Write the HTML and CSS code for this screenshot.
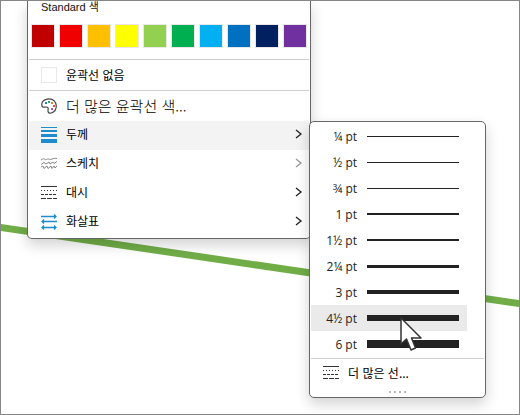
FILE: index.html
```
<!DOCTYPE html>
<html lang="ko">
<head>
  <meta charset="UTF-8" />
  <meta name="viewport" content="width=device-width, initial-scale=1" />
  <title>윤곽선 두께</title>
  <link rel="stylesheet" href="styles.css">
</head>
<body>
  <main class="canvas">
    <svg class="drawn-line" viewBox="0 0 518 413" preserveAspectRatio="none" aria-hidden="true">
      <line x1="-10" y1="225" x2="528" y2="304" stroke="#70ad47" stroke-width="7" />
    </svg>

    <!-- Outline menu -->
    <div class="menu outline-menu">
      <h2 class="menu-title">Standard 색</h2>
      <div class="swatches">
        <button class="swatch dark-red" aria-label="진한 빨강"></button>
        <button class="swatch red" aria-label="빨강"></button>
        <button class="swatch orange" aria-label="주황"></button>
        <button class="swatch yellow" aria-label="노랑"></button>
        <button class="swatch light-green" aria-label="연한 녹색"></button>
        <button class="swatch green" aria-label="녹색"></button>
        <button class="swatch light-blue" aria-label="연한 파랑"></button>
        <button class="swatch blue" aria-label="파랑"></button>
        <button class="swatch dark-blue" aria-label="진한 파랑"></button>
        <button class="swatch purple" aria-label="자주"></button>
      </div>
      <button class="item bordered">
        <span class="no-outline"></span>
        <span class="label">윤곽선 없음</span>
      </button>
      <button class="item bordered large">
        <svg class="icon" viewBox="0 0 16 16">
          <path d="M8 .8C3.600.8.700 3.400.700 6.500c0 2 1.300 3 2.900 2.700 1.500-.3 2.600-.5 3.300.5.900 1.200-.3 2.400.2 4 .5 1.500 2.100 1.800 3.800 1.100 2.700-1.100 4.400-3.800 4.400-6.800C15.300 3.800 12.300.8 8 .8z" fill="#fff" stroke="#444" stroke-width="1.200" />
          <rect x="4" y="4" width="2" height="2" fill="#1e8bcd" />
          <rect x="7" y="3" width="2" height="2" fill="#2fa56a" />
          <rect x="10" y="4" width="2" height="2" fill="#e8812d" />
          <rect x="12" y="7" width="2" height="2" fill="#dd4b4b" />
          <rect x="10" y="10" width="2" height="2" fill="#a356c4" />
        </svg>
        <span class="label">더 많은 윤곽선 색...</span>
      </button>
      <button class="item sub active">
        <svg class="icon" viewBox="0 0 16 16" fill="#1e8bcd" shape-rendering="crispEdges">
          <rect y="0" width="16" height="1" />
          <rect y="3" width="16" height="2" />
          <rect y="7" width="16" height="3" />
          <rect y="12" width="16" height="4" />
        </svg>
        <span class="label">두께</span>
        <svg class="chevron" viewBox="0 0 8 10"><path d="M1 1l5 4-5 4" /></svg>
      </button>
      <button class="item sub">
        <svg class="icon" viewBox="0 0 16 16" fill="none" stroke="#888">
          <path d="M0 4c2-1.500 3-1.500 4-.5s2-1 3.500-.5 2 1 3.500 0 3-.5 5-.5" />
          <path d="M0 8.500l3-2 2 1.500 3-2 1 2 3-2 1 1.500 3-2" />
          <path d="M0 11l2-1 1 2.500 3-2.500 1 2.500 3-2.500 1 2.500 2-2.500 1 2 2-2" />
        </svg>
        <span class="label">스케치</span>
        <svg class="chevron muted" viewBox="0 0 8 10"><path d="M1 1l5 4-5 4" /></svg>
      </button>
      <button class="item sub">
        <svg class="icon" viewBox="0 0 16 16" fill="none" stroke="#333" shape-rendering="crispEdges">
          <path d="M0 1.500h16" />
          <path d="M0 5.500h16" stroke-dasharray="1 2" />
          <path d="M0 9.500h16" stroke-dasharray="3 1" />
          <path d="M0 13.500h16" stroke-dasharray="5 1" />
        </svg>
        <span class="label">대시</span>
        <svg class="chevron" viewBox="0 0 8 10"><path d="M1 1l5 4-5 4" /></svg>
      </button>
      <button class="item sub">
        <svg class="icon" viewBox="0 0 16 16" fill="none" stroke="#1e8bcd" stroke-width="1.300">
          <path d="M0 2.500h15M13 .5l2 2-2 2" />
          <path d="M16 7.500H1M3 5.500l-2 2 2 2" />
          <path d="M1 13.500h14M3 11.500l-2 2 2 2M13 11.500l2 2-2 2" />
        </svg>
        <span class="label">화살표</span>
        <svg class="chevron" viewBox="0 0 8 10"><path d="M1 1l5 4-5 4" /></svg>
      </button>
    </div>

    <!-- Weight submenu -->
    <div class="menu weight-menu">
      <button class="weight"><span class="pt">¼ pt</span><span class="rule w1"></span></button>
      <button class="weight"><span class="pt">½ pt</span><span class="rule w1"></span></button>
      <button class="weight"><span class="pt">¾ pt</span><span class="rule w1"></span></button>
      <button class="weight"><span class="pt">1 pt</span><span class="rule w2"></span></button>
      <button class="weight"><span class="pt">1½ pt</span><span class="rule w2"></span></button>
      <button class="weight"><span class="pt">2¼ pt</span><span class="rule w3"></span></button>
      <button class="weight"><span class="pt">3 pt</span><span class="rule w4"></span></button>
      <button class="weight hovered"><span class="pt">4½ pt</span><span class="rule w6"></span></button>
      <button class="weight"><span class="pt">6 pt</span><span class="rule w8"></span></button>
      <button class="item more-lines">
        <svg class="icon" viewBox="0 0 16 16" fill="none" stroke="#333" shape-rendering="crispEdges">
          <path d="M0 1.500h16" />
          <path d="M0 5.500h16" stroke-dasharray="1 2" />
          <path d="M0 9.500h16" stroke-dasharray="3 1" />
          <path d="M0 13.500h16" stroke-dasharray="5 1" />
        </svg>
        <span class="label">더 많은 선...</span>
      </button>
      <div class="grip"><i></i><i></i><i></i><i></i></div>
      <svg class="cursor" viewBox="0 0 24 36" aria-hidden="true">
        <path d="M2 2v26l5.500-5L12 34l4.500-2-4-10H22z" fill="#fff" stroke="#333" stroke-width="1.500" stroke-linejoin="round" />
      </svg>
    </div>
  </main>
</body>
</html>
```

FILE: styles.css
```
* {
  box-sizing: border-box;
}

body {
  margin: 0;
  font-family: "Open Sans", "Noto Sans CJK KR", sans-serif;
  font-size: 12px;
  color: #111;
  background: #fff;
}

button {
  margin: 0;
  padding: 0;
  border: none;
  background: none;
  font: inherit;
  color: inherit;
  text-align: left;
  cursor: pointer;
}

.canvas {
  position: relative;
  min-height: 100vh;
  border: 1px solid #868686;
  overflow: hidden;
}

.drawn-line {
  position: absolute;
  inset: 0;
  width: 100%;
  height: 100%;
}

.menu {
  position: absolute;
  background: #fff;
  border: 1px solid #666;
  box-shadow: 0 6px 14px rgba(0, 0, 0, 0.18);
}

/* Outline menu */
.outline-menu {
  top: 0;
  left: 26px;
  width: 284px;
  padding: 0 1px 1px;
  border-top: none;
  border-radius: 0 0 5px 5px;
}

.menu-title {
  margin: 0;
  padding-left: 12px;
  font-family: "Liberation Sans", "Noto Sans CJK KR", sans-serif;
  font-size: 11px;
  font-weight: normal;
  line-height: 12px;
}

.swatches {
  display: flex;
  gap: 4px;
  padding: 11px 2px;
}

.swatch {
  width: 24px;
  height: 24px;
  border: 1px solid #e8e8e8;
}

.dark-red { background: #c00000; }
.red { background: #f00000; }
.orange { background: #ffc000; }
.yellow { background: #ffff00; }
.light-green { background: #92d050; }
.green { background: #00b050; }
.light-blue { background: #00b0f0; }
.blue { background: #0070c0; }
.dark-blue { background: #002060; }
.purple { background: #7030a0; }

.item {
  display: flex;
  align-items: center;
  gap: 9px;
  width: 100%;
  height: 29px;
  padding: 0 6px 0 12px;
  font-family: "Noto Sans CJK KR", sans-serif;
  color: #000;
}

.item .label {
  flex: 1;
  line-height: 20px;
  white-space: nowrap;
}

.sub {
  padding-bottom: 3px;
}

.bordered {
  height: 31px;
  border-top: 1px solid #d0d0d0;
}

.large {
  font-size: 15px;
  font-weight: 300;
}

.active {
  background: #f3f3f3;
}

.no-outline {
  width: 16px;
  height: 16px;
  border: 1px solid #e8e8e8;
}

.icon {
  width: 16px;
  height: 16px;
}

.sub .icon {
  margin-top: 2px;
}

.chevron {
  width: 8px;
  height: 10px;
  fill: none;
  stroke: #222;
  stroke-width: 1.3;
}

.muted {
  stroke: #999;
}

/* Weight submenu */
.weight-menu {
  top: 120px;
  left: 308px;
  width: 177px;
  padding: 1px;
  border-radius: 5px;
}

.weight {
  display: flex;
  align-items: center;
  gap: 10px;
  width: 156px;
  height: 26px;
  color: #222;
}

.hovered {
  background: #eaeaea;
}

.pt {
  width: 46px;
  text-align: right;
}

.rule {
  width: 92px;
  background: #222;
}

.w1 { height: 1px; }
.w2 { height: 2px; }
.w3 { height: 3px; }
.w4 { height: 4px; }
.w6 { height: 6px; }
.w8 { height: 8px; }

.more-lines {
  margin-top: 1px;
  border-top: 1px solid #d0d0d0;
}

.grip {
  display: flex;
  justify-content: center;
  gap: 3px;
  padding: 4px 0 3px;
}

.grip i {
  width: 2px;
  height: 2px;
  background: #b4bcc8;
}

.cursor {
  position: absolute;
  top: 194px;
  left: 89px;
  width: 24px;
  height: 36px;
}
```
